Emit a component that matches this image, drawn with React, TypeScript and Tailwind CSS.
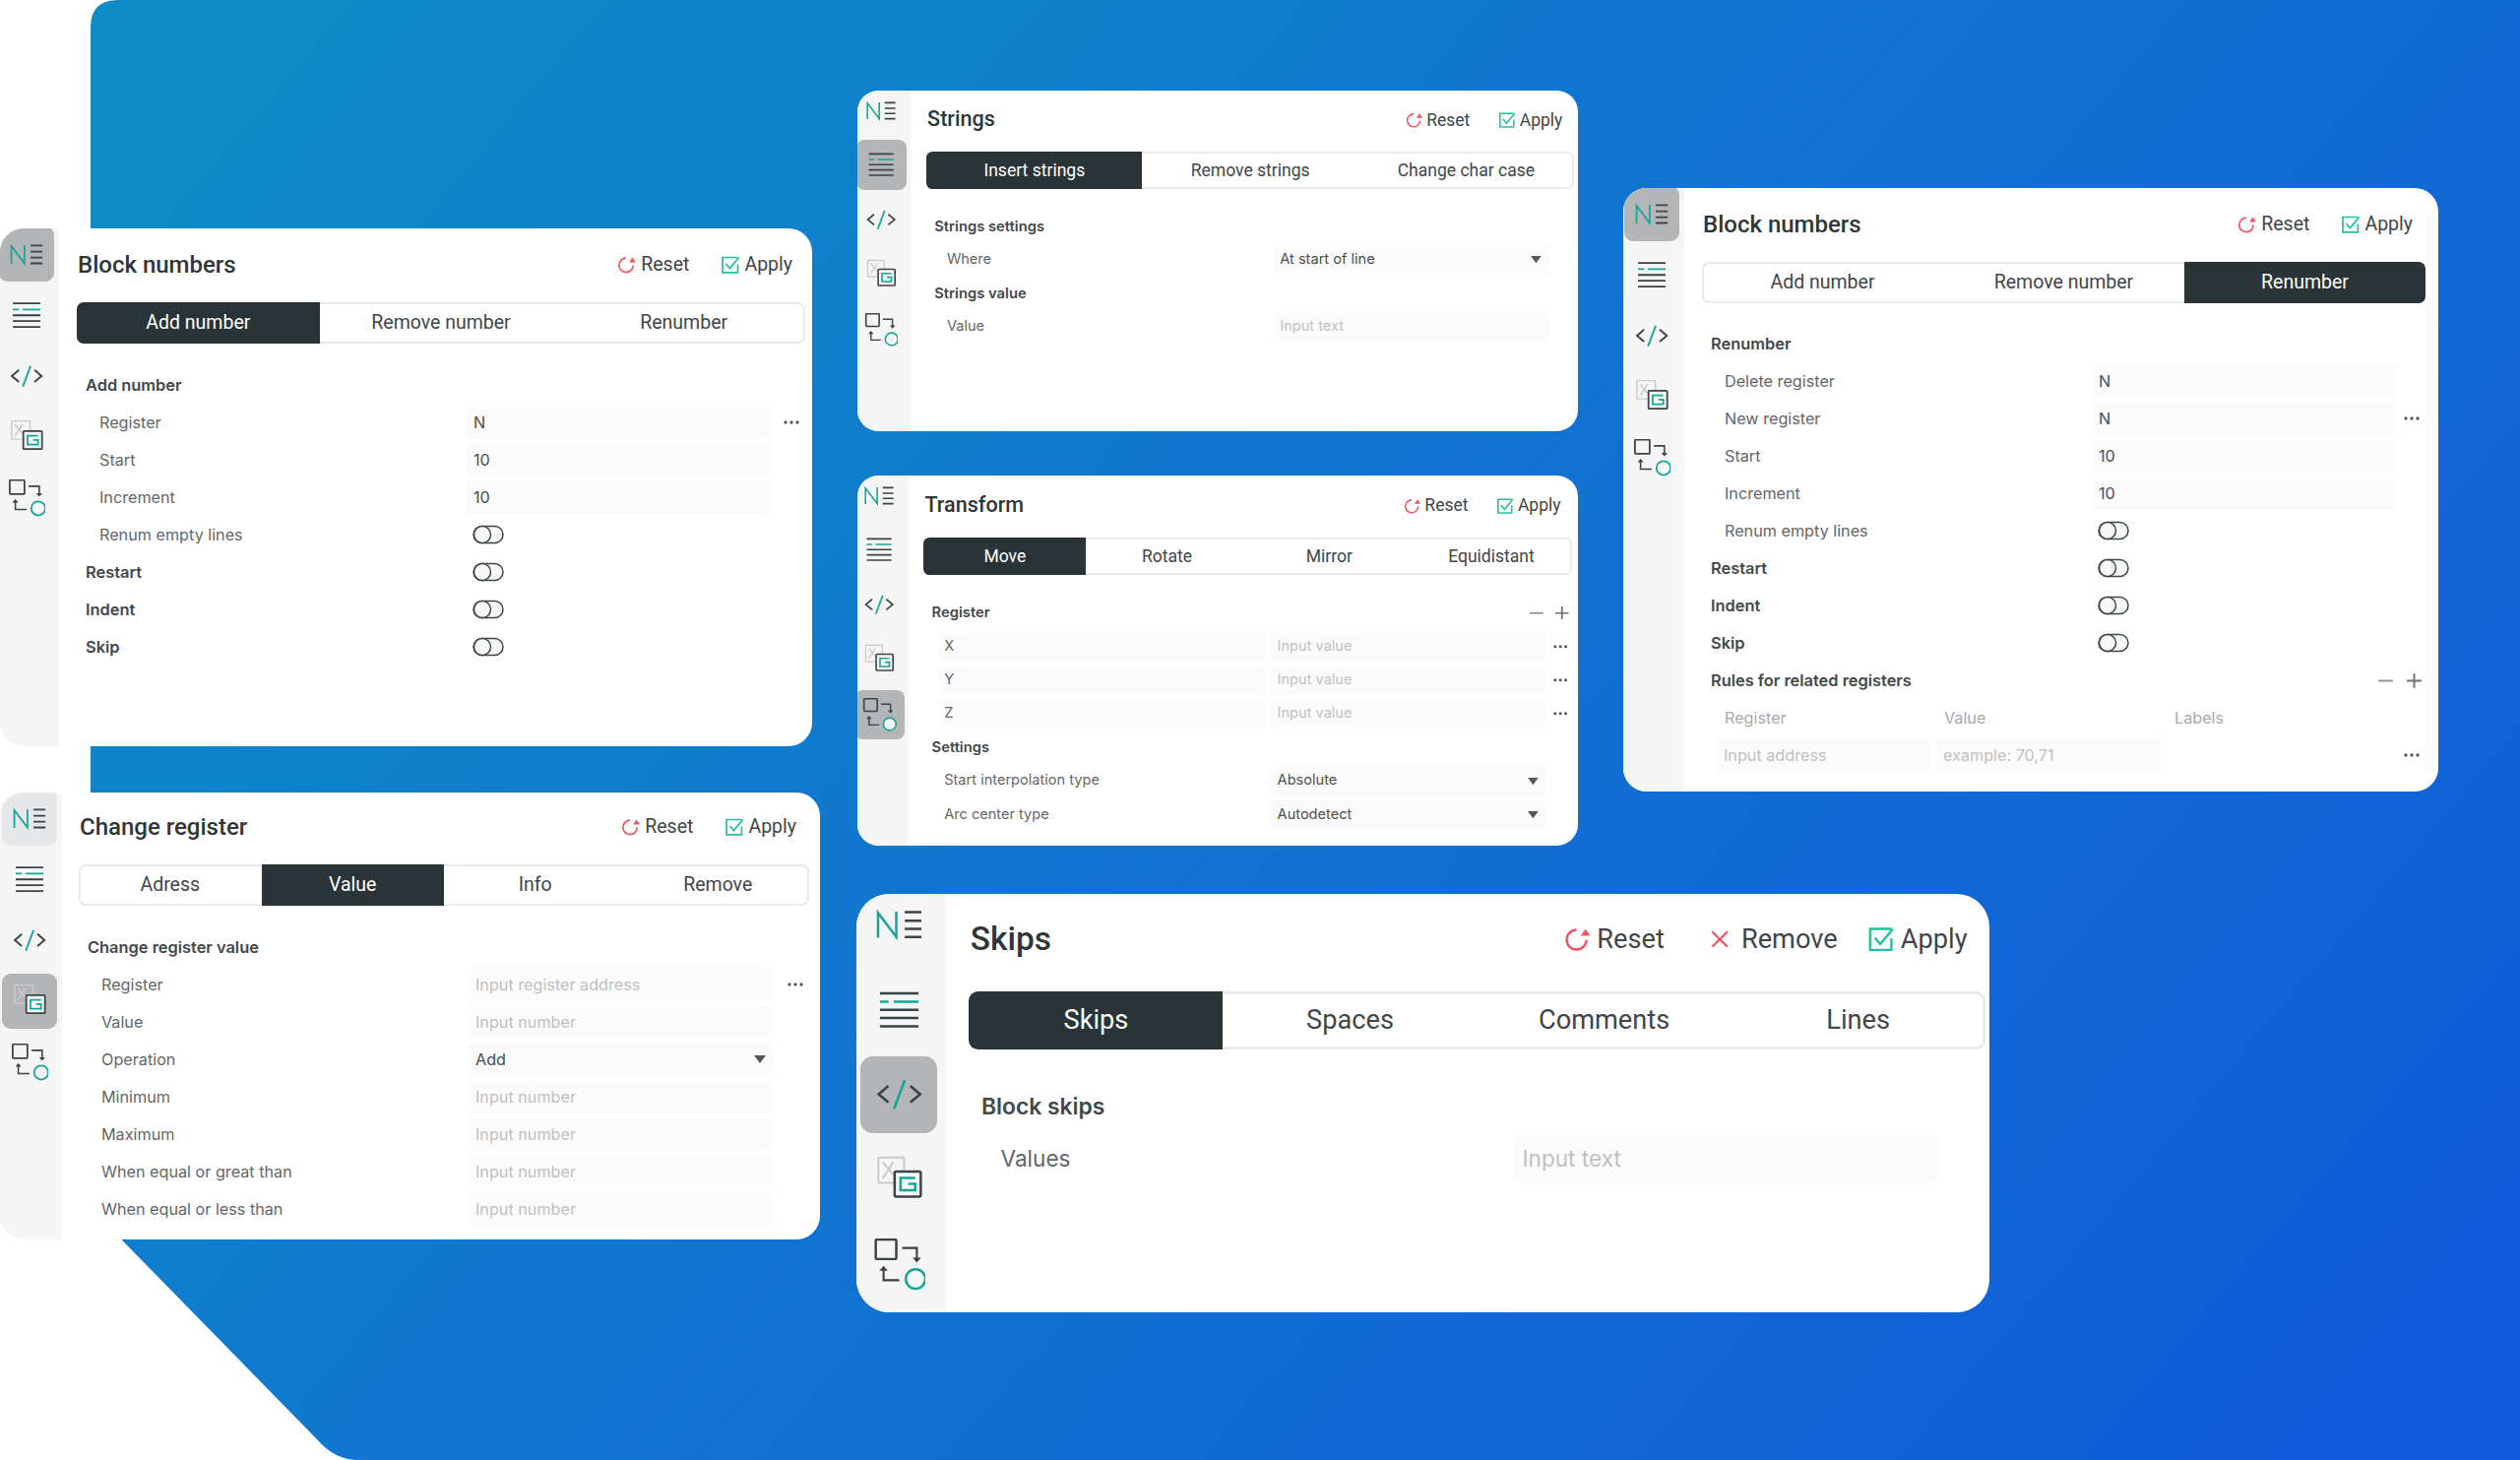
import React, { createContext, useContext } from "react";

const DARK = "#3b4346";
const TEAL = "#17a598";
const S = 7.5;

const GridCols = createContext("grid-cols-[396px_310px_1fr]");

function SvgBox({ vb, children }: { vb: string; children: React.ReactNode }) {
  return (
    <svg viewBox={vb} className="w-[38px] h-[38px]" fill="none">
      {children}
    </svg>
  );
}

const IconN = () => (
  <SvgBox vb="78 38 160 160">
    <path d="M93 160V84L149 158V80" stroke={TEAL} strokeWidth={S} />
    <path d="M175 82H226M175 108H226M175 133H226M175 158H226" stroke={DARK} strokeWidth={S} />
  </SvgBox>
);
const IconList = () => (
  <SvgBox vb="78 293 160 160">
    <path d="M99 323H217M99 374H217M99 399H217M99 424H217" stroke={DARK} strokeWidth={S} />
    <path d="M99 349H125M141 349H217" stroke={TEAL} strokeWidth={S} />
  </SvgBox>
);
const IconCode = () => (
  <SvgBox vb="78 556 160 160">
    <path d="M125 610L95 636L125 661M192 610L222 636L192 661" stroke={DARK} strokeWidth={8} />
    <path d="M175 593L142 681" stroke={TEAL} strokeWidth={8} />
  </SvgBox>
);
const IconG = () => (
  <SvgBox vb="78 820 160 160">
    <rect x="94" y="831" width="79" height="78" rx="3" stroke="#c9cacb" strokeWidth={6} />
    <path d="M108 845L140 885M140 845L108 895" stroke="#c9cacb" strokeWidth={6} />
    <rect x="144" y="874" width="80" height="77" rx="4" fill="#f7f7f7" stroke={DARK} strokeWidth={S} />
    <path d="M207 894H162V932H207V912H186" stroke={TEAL} strokeWidth={S} />
  </SvgBox>
);
const IconTransform = () => (
  <SvgBox vb="78 1075 160 160">
    <rect x="86" y="1078" width="63" height="60" rx="4" stroke={DARK} strokeWidth={S} />
    <path d="M167 1104H212V1136M110 1172V1203H158" stroke={DARK} strokeWidth={6.5} />
    <path d="M199 1134H225L212 1149ZM97 1174H123L110 1159Z" fill={DARK} />
    <circle cx="208" cy="1199" r="30" fill="#f7f7f7" stroke={TEAL} strokeWidth={S} />
  </SvgBox>
);

const SIDE = [IconN, IconList, IconCode, IconG, IconTransform];

function ResetIcon() {
  return (
    <svg viewBox="0 0 20 20" className="w-[20px] h-[20px]" fill="none">
      <path d="M9 3.2A7.2 7.2 0 1 0 16.2 10.5" stroke="#f2555f" strokeWidth="1.7" />
      <path d="M12 7.6H19L15.5 2.6Z" fill="#f2555f" />
    </svg>
  );
}
function ApplyIcon() {
  return (
    <svg viewBox="0 0 20 20" className="w-[20px] h-[20px]" fill="none">
      <path d="M17.5 9.5V17.8H2V2.5H17.5" stroke="#25bf9f" strokeWidth="1.7" />
      <path d="M5.5 9L9.3 13.6L18.6 2.6" stroke="#25bf9f" strokeWidth="1.7" />
    </svg>
  );
}
function CloseIcon() {
  return (
    <svg viewBox="0 0 14 14" className="w-[13px] h-[13px]" fill="none">
      <path d="M1 1L13 13M13 1L1 13" stroke="#f2555f" strokeWidth="1.7" />
    </svg>
  );
}
function Dots() {
  return (
    <svg viewBox="0 0 16 4" className="w-[16px] h-[4px]">
      <circle cx="2" cy="2" r="1.7" fill="#55595c" />
      <circle cx="8" cy="2" r="1.7" fill="#55595c" />
      <circle cx="14" cy="2" r="1.7" fill="#55595c" />
    </svg>
  );
}
function Caret() {
  return (
    <svg viewBox="0 0 12 8" className="w-[12px] h-[8px]">
      <path d="M0 0H12L6 8Z" fill="#55595c" />
    </svg>
  );
}
function Toggle() {
  return (
    <svg viewBox="0 0 32 20" className="w-[32px] h-[20px]" fill="none">
      <rect x="1" y="1.5" width="30" height="17" rx="8.5" fill="#f7f7f7" stroke="#3f4649" strokeWidth="1.5" />
      <circle cx="10" cy="10" r="8.5" fill="#f7f7f7" stroke="#3f4649" strokeWidth="1.5" />
    </svg>
  );
}
function PlusMinus() {
  return (
    <div className="flex items-center gap-[14px] pr-[4px]">
      <svg viewBox="0 0 16 16" className="w-[15px] h-[15px]">
        <path d="M0 8H16" stroke="#8d9193" strokeWidth="2" />
      </svg>
      <svg viewBox="0 0 16 16" className="w-[15px] h-[15px]">
        <path d="M0 8H16M8 0V16" stroke="#6a6f72" strokeWidth="2" />
      </svg>
    </div>
  );
}

function Section({ label, pm }: { label: string; pm?: boolean }) {
  return (
    <div className="h-[38px] flex items-center justify-between pl-[9px] text-[#43484b] text-[16.4px] font-semibold">
      <span>{label}</span>
      {pm && <PlusMinus />}
    </div>
  );
}

function InputBox({ value, placeholder, select }: { value?: string; placeholder?: string; select?: boolean }) {
  return (
    <div className="h-[34px] bg-[#fbfbfb] rounded-[4px] flex items-center justify-between pl-[7px] pr-[8px]">
      <span className={value ? "text-[#4a4f52]" : "text-[#bfc0c1]"}>{value ?? placeholder}</span>
      {select && <Caret />}
    </div>
  );
}

function Field(p: { label: string; value?: string; placeholder?: string; select?: boolean; dots?: boolean; cell?: boolean }) {
  const cols = useContext(GridCols);
  return (
    <div className={`${cols} h-[38px] grid items-center text-[16.2px]`}>
      {p.cell ? (
        <div className="ml-[16px] mr-[6px] h-[34px] bg-[#fbfbfb] rounded-[4px] flex items-center pl-[7px] text-[#63676a]">{p.label}</div>
      ) : (
        <div className="pl-[23px] text-[#63676a]">{p.label}</div>
      )}
      <InputBox value={p.value} placeholder={p.placeholder} select={p.select} />
      <div className="flex justify-end pr-[6px]">{p.dots && <Dots />}</div>
    </div>
  );
}

function ToggleRow({ label, bold }: { label: string; bold?: boolean }) {
  const cols = useContext(GridCols);
  return (
    <div className={`${cols} h-[38px] grid items-center text-[16.2px]`}>
      <div className={bold ? "pl-[9px] text-[16.4px] font-semibold text-[#43484b]" : "pl-[23px] text-[#63676a]"}>{label}</div>
      <div className="pl-[6px] flex items-center">
        <Toggle />
      </div>
    </div>
  );
}

function Tabs({ items, active }: { items: string[]; active: number }) {
  return (
    <div className="h-[42px] flex rounded-[7px] overflow-hidden shadow-[inset_0_0_0_2px_#e8e9e9] font-['Roboto',sans-serif] text-[19.5px]">
      {items.map((t, i) => (
        <div
          key={t}
          className={
            i === active
              ? "flex-1 flex items-center justify-center bg-[#2a3335] text-white"
              : "flex-1 flex items-center justify-center text-[#3f4649]"
          }
        >
          {t}
        </div>
      ))}
    </div>
  );
}

type PanelProps = {
  wrap: string;
  size: string;
  side: string;
  itemShift: string;
  main: string;
  tabsMt?: string;
  bodyMt?: string;
  cols?: string;
  title: string;
  tabs: string[];
  activeTab: number;
  active: number;
  soft?: number;
  remove?: boolean;
  children: React.ReactNode;
};

function Panel(p: PanelProps) {
  return (
    <div className={p.wrap}>
      <div className={`${p.size} flex bg-white rounded-[24px] overflow-hidden font-['Inter',sans-serif]`}>
        <div className={`${p.side} shrink-0 bg-[#f5f5f5]`}>
          <div className={`${p.itemShift} flex flex-col gap-[6px]`}>
            {SIDE.map((Icon, i) => (
              <div
                key={i}
                className={
                  i === p.active
                    ? "w-[56px] h-[56px] shrink-0 rounded-[9px] bg-[#b4b5b7] flex items-center justify-center"
                    : i === p.soft
                      ? "w-[56px] h-[56px] shrink-0 rounded-[9px] bg-[#e6e7e8] flex items-center justify-center"
                      : "w-[56px] h-[56px] shrink-0 flex items-center justify-center"
                }
              >
                <Icon />
              </div>
            ))}
          </div>
        </div>
        <div className={`${p.main} flex-1 min-w-0`}>
          <div className="h-[50px] flex items-center justify-between pr-[13px] font-['Roboto',sans-serif]">
            <div className="pl-[1px] text-[24px] font-medium text-[#2f3639]">{p.title}</div>
            <div className="flex items-center text-[19.5px] text-[#3f4649]">
              <div className="flex items-center gap-[4px]">
                <ResetIcon />
                <span>Reset</span>
              </div>
              {p.remove && (
                <div className="flex items-center gap-[9px] ml-[34px]">
                  <CloseIcon />
                  <span>Remove</span>
                </div>
              )}
              <div className={p.remove ? "flex items-center gap-[4px] ml-[22px]" : "flex items-center gap-[4px] ml-[32px]"}>
                <ApplyIcon />
                <span>Apply</span>
              </div>
            </div>
          </div>
          <div className={p.tabsMt ?? "mt-[13px]"}>
            <Tabs items={p.tabs} active={p.activeTab} />
          </div>
          <div className={p.bodyMt ?? "mt-[23px]"}>
            <GridCols.Provider value={p.cols ?? "grid-cols-[396px_310px_1fr]"}>{p.children}</GridCols.Provider>
          </div>
        </div>
      </div>
    </div>
  );
}

export default function App() {
  return (
    <div className="relative w-[2560px] h-[1483px] overflow-hidden bg-white">
      <svg viewBox="0 0 2560 1483" className="absolute left-0 top-0 w-[2560px] h-[1483px]">
        <defs>
          <linearGradient id="bg" gradientUnits="userSpaceOnUse" x1="300" y1="-100" x2="2300" y2="1600">
            <stop offset="0" stopColor="#0e8cc6" />
            <stop offset="1" stopColor="#125adb" />
          </linearGradient>
        </defs>
        <path d="M92 28Q92 0 120 0H2560V1483H364Q340 1483 322 1462L92 1227Z" fill="url(#bg)" />
      </svg>

      <Panel
        wrap="absolute left-0 top-[232px]"
        size="w-[825px] h-[526px]"
        side="w-[60px]"
        itemShift="-ml-[1px] -mt-[2px]"
        main="pl-[18px] pr-[7px] pt-[12px]"
        title="Block numbers"
        tabs={["Add number", "Remove number", "Renumber"]}
        activeTab={0}
        active={0}
      >
        <Section label="Add number" />
        <Field label="Register" value="N" dots />
        <Field label="Start" value="10" />
        <Field label="Increment" value="10" />
        <ToggleRow label="Renum empty lines" />
        <ToggleRow label="Restart" bold />
        <ToggleRow label="Indent" bold />
        <ToggleRow label="Skip" bold />
      </Panel>

      <Panel
        wrap="absolute left-0 top-[805px]"
        size="w-[833px] h-[454px]"
        side="w-[63px]"
        itemShift="ml-[2px] -mt-[2px]"
        main="pl-[17px] pr-[11px] pt-[10px]"
        title="Change register"
        tabs={["Adress", "Value", "Info", "Remove"]}
        activeTab={1}
        active={3}
        soft={0}
      >
        <Section label="Change register value" />
        <Field label="Register" placeholder="Input register address" dots />
        <Field label="Value" placeholder="Input number" />
        <Field label="Operation" value="Add" select />
        <Field label="Minimum" placeholder="Input number" />
        <Field label="Maximum" placeholder="Input number" />
        <Field label="When equal or great than" placeholder="Input number" />
        <Field label="When equal or less than" placeholder="Input number" />
      </Panel>

      <Panel
        wrap="absolute left-[871px] top-[92px]"
        size="w-[813px] h-[384px] [zoom:0.9]"
        side="w-[60px]"
        itemShift="-ml-[1px] -mt-[6px]"
        main="pl-[18px] pr-[4px] pt-[8px]"
        tabsMt="mt-[11px]"
        cols="grid-cols-[392px_310px_1fr]"
        title="Strings"
        tabs={["Insert strings", "Remove strings", "Change char case"]}
        activeTab={0}
        active={1}
      >
        <Section label="Strings settings" />
        <Field label="Where" value="At start of line" select />
        <Section label="Strings value" />
        <Field label="Value" placeholder="Input text" />
      </Panel>

      <Panel
        wrap="absolute left-[871px] top-[483px]"
        size="w-[813px] h-[418px] [zoom:0.9]"
        side="w-[58px]"
        itemShift="-ml-[3px] -mt-[6px]"
        main="pl-[17px] pr-[6px] pt-[9px]"
        tabsMt="mt-[11px]"
        bodyMt="mt-[24px]"
        cols="grid-cols-[392px_310px_1fr]"
        title="Transform"
        tabs={["Move", "Rotate", "Mirror", "Equidistant"]}
        activeTab={0}
        active={4}
      >
        <Section label="Register" pm />
        <Field cell label="X" placeholder="Input value" dots />
        <Field cell label="Y" placeholder="Input value" dots />
        <Field cell label="Z" placeholder="Input value" dots />
        <Section label="Settings" />
        <Field label="Start interpolation type" value="Absolute" select />
        <Field label="Arc center type" value="Autodetect" select />
      </Panel>

      <Panel
        wrap="absolute left-[1649px] top-[191px]"
        size="w-[828px] h-[613px]"
        side="w-[62px]"
        itemShift="ml-[1px] -mt-[2px]"
        main="pl-[18px] pr-[13px] pt-[12px]"
        bodyMt="mt-[22px]"
        title="Block numbers"
        tabs={["Add number", "Remove number", "Renumber"]}
        activeTab={2}
        active={0}
      >
        <Section label="Renumber" />
        <Field label="Delete register" value="N" />
        <Field label="New register" value="N" dots />
        <Field label="Start" value="10" />
        <Field label="Increment" value="10" />
        <ToggleRow label="Renum empty lines" />
        <ToggleRow label="Restart" bold />
        <ToggleRow label="Indent" bold />
        <ToggleRow label="Skip" bold />
        <Section label="Rules for related registers" pm />
        <div className="h-[38px] grid grid-cols-[238px_242px_1fr] items-center text-[16.2px] text-[#a7a9ab]">
          <div className="pl-[23px]">Register</div>
          <div className="pl-[8px]">Value</div>
          <div>Labels</div>
        </div>
        <div className="h-[38px] grid grid-cols-[238px_235px_1fr] items-center text-[16.2px]">
          <div className="ml-[15px] mr-[6px]">
            <InputBox placeholder="Input address" />
          </div>
          <div className="mr-[6px]">
            <InputBox placeholder="example: 70,71" />
          </div>
          <div className="flex justify-end pr-[6px]">
            <Dots />
          </div>
        </div>
      </Panel>

      <Panel
        wrap="absolute left-[870px] top-[908px]"
        size="w-[825px] h-[305px] [zoom:1.395]"
        side="w-[65px]"
        itemShift="ml-[3px] -mt-[6px]"
        main="pl-[17px] pr-[3px] pt-[8px]"
        title="Skips"
        tabs={["Skips", "Spaces", "Comments", "Lines"]}
        activeTab={0}
        active={2}
        remove
      >
        <Section label="Block skips" />
        <Field label="Values" placeholder="Input text" />
      </Panel>
    </div>
  );
}
